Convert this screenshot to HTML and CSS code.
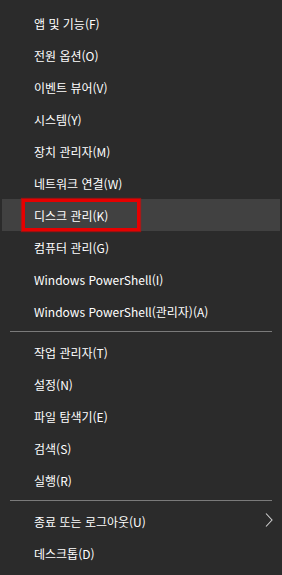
FILE: index.html
```html
<!DOCTYPE html>
<html lang="ko">
<head>
<meta charset="utf-8">
<link rel="stylesheet" href="styles.css">
</head>
<body>
<div class="menu">
  <div class="item">앱 및 기능(F)</div>
  <div class="item">전원 옵션(O)</div>
  <div class="item">이벤트 뷰어(V)</div>
  <div class="item">시스템(Y)</div>
  <div class="item">장치 관리자(M)</div>
  <div class="item">네트워크 연결(W)</div>
  <div class="item active">디스크 관리(K)<span class="mark"></span></div>
  <div class="item">컴퓨터 관리(G)</div>
  <div class="item">Windows PowerShell(I)</div>
  <div class="item">Windows PowerShell(관리자)(A)</div>
  <div class="sep"></div>
  <div class="item">작업 관리자(T)</div>
  <div class="item">설정(N)</div>
  <div class="item">파일 탐색기(E)</div>
  <div class="item">검색(S)</div>
  <div class="item">실행(R)</div>
  <div class="sep"></div>
  <div class="item sub">종료 또는 로그아웃(U)
    <svg class="chev" width="8" height="14" viewBox="0 0 8 14"><path d="M1 0.5 L7 7 L1 13.5" fill="none" stroke="#d0d0d0" stroke-width="1.1"/></svg>
  </div>
  <div class="item">데스크톱(D)</div>
</div>
</body>
</html>
```
FILE: styles.css
```css
html, body {
  margin: 0;
  padding: 0;
  background: #2b2b2b;
}
.menu {
  width: 282px;
  height: 575px;
  box-sizing: border-box;
  padding: 7px 2px 6px 2px;
  display: flex;
  flex-direction: column;
  background: #2b2b2b;
  font-family: "Noto Sans CJK KR", "Noto Sans", sans-serif;
  font-size: 12px;
  color: #ffffff;
}
.item {
  position: relative;
  height: 32px;
  flex: none;
  display: flex;
  align-items: center;
  padding-left: 32px;
  padding-right: 8px;
  white-space: nowrap;
}
.item.active {
  background: #414141;
}
.mark {
  position: absolute;
  left: 20px;
  top: 0;
  width: 118px;
  height: 32px;
  box-sizing: border-box;
  border: 3px solid #e60000;
  box-shadow: 0 0 1px 1px rgba(230, 0, 0, 0.6);
}
.sep {
  flex: none;
  height: 1px;
  margin: 4px 8px 4px 8px;
  background: #7a7a7a;
}
.sub {
  justify-content: space-between;
  padding-right: 7px;
}
.chev {
  margin-top: -2px;
}
```
